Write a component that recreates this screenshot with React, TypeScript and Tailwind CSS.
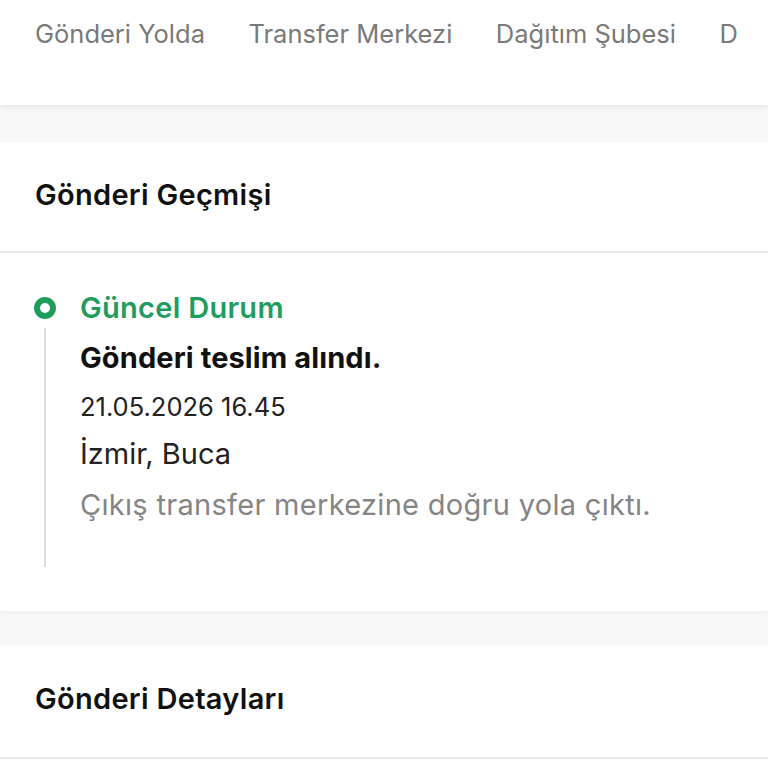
import React from "react";

export default function App() {
  const tabs = ["Gönderi Yolda", "Transfer Merkezi", "Dağıtım Şubesi", "Dağıtımda"];
  return (
    <div className="w-[768px] h-[768px] overflow-hidden bg-[#f8f8f8]" style={{ fontFamily: "Inter, 'Noto Sans', sans-serif" }}>
      <div className="relative z-10 h-[105px] bg-white shadow-[0_2px_6px_rgba(0,0,0,0.08)]">
        <div className="w-[737px] overflow-hidden">
          <div className="flex gap-[43.5px] pl-[35px] pt-[18px] whitespace-nowrap">
            {tabs.map((t) => (
              <span key={t} className="text-[25.5px] leading-[32px] text-[#7a7a7a]">{t}</span>
            ))}
          </div>
        </div>
      </div>
      <div className="h-[37px]" />
      <div className="bg-white shadow-[0_1px_4px_rgba(0,0,0,0.06)]">
        <div className="pt-[35px] pb-[38px] px-[35px]">
          <h2 className="text-[29px] leading-[36px] font-semibold tracking-[0.3px] text-[#111]">Gönderi Geçmişi</h2>
        </div>
        <div className="h-[2px] bg-[#e8e8e8]" />
        <div className="relative pl-[80px] pt-[37px] pb-[88px]">
          <div className="absolute left-[34px] top-[44px] w-[22px] h-[22px] rounded-full border-[6px] border-[#1f9d5f] bg-white" />
          <div className="absolute left-[44px] top-[75px] w-[2px] h-[239px] bg-[#dddddd]" />
          <div className="text-[29px] leading-[36px] font-semibold tracking-[0.3px] text-[#1f9d5f]">Güncel Durum</div>
          <div className="mt-[14px] text-[29px] leading-[36px] font-bold tracking-[0.1px] text-[#111]">Gönderi teslim alındı.</div>
          <div className="mt-[15px] text-[25.5px] leading-[32px] text-[#222]">21.05.2026 16.45</div>
          <div className="mt-[13px] text-[29px] leading-[36px] text-[#222]">İzmir, Buca</div>
          <div className="mt-[15px] text-[29px] leading-[36px] tracking-[0.3px] text-[#858585]">Çıkış transfer merkezine doğru yola çıktı.</div>
        </div>
      </div>
      <div className="h-[34px]" />
      <div className="bg-white">
        <div className="pt-[36px] pb-[40px] px-[35px]">
          <h2 className="text-[29px] leading-[36px] font-semibold tracking-[0.3px] text-[#111]">Gönderi Detayları</h2>
        </div>
        <div className="h-[2px] bg-[#e8e8e8]" />
        <div className="h-[40px]" />
      </div>
    </div>
  );
}
